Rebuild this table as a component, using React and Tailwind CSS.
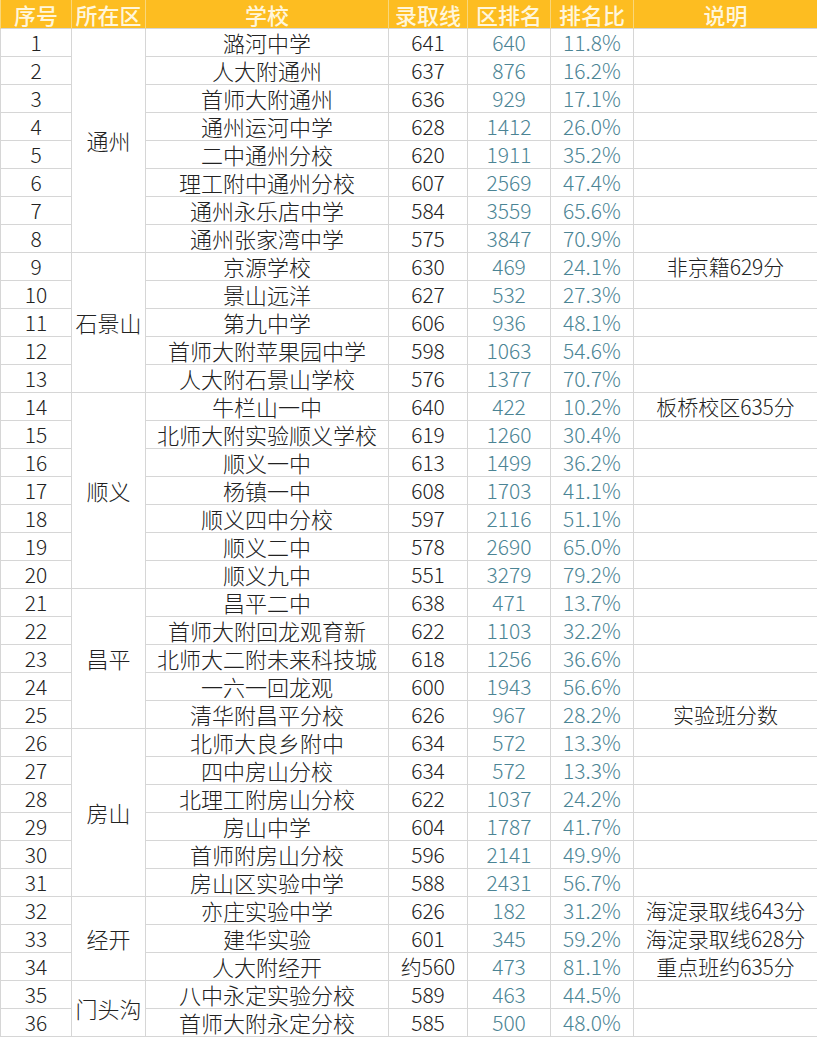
import React from "react";

const rows = [
  ["1", "潞河中学", "641", "640", "11.8%", ""],
  ["2", "人大附通州", "637", "876", "16.2%", ""],
  ["3", "首师大附通州", "636", "929", "17.1%", ""],
  ["4", "通州运河中学", "628", "1412", "26.0%", ""],
  ["5", "二中通州分校", "620", "1911", "35.2%", ""],
  ["6", "理工附中通州分校", "607", "2569", "47.4%", ""],
  ["7", "通州永乐店中学", "584", "3559", "65.6%", ""],
  ["8", "通州张家湾中学", "575", "3847", "70.9%", ""],
  ["9", "京源学校", "630", "469", "24.1%", "非京籍629分"],
  ["10", "景山远洋", "627", "532", "27.3%", ""],
  ["11", "第九中学", "606", "936", "48.1%", ""],
  ["12", "首师大附苹果园中学", "598", "1063", "54.6%", ""],
  ["13", "人大附石景山学校", "576", "1377", "70.7%", ""],
  ["14", "牛栏山一中", "640", "422", "10.2%", "板桥校区635分"],
  ["15", "北师大附实验顺义学校", "619", "1260", "30.4%", ""],
  ["16", "顺义一中", "613", "1499", "36.2%", ""],
  ["17", "杨镇一中", "608", "1703", "41.1%", ""],
  ["18", "顺义四中分校", "597", "2116", "51.1%", ""],
  ["19", "顺义二中", "578", "2690", "65.0%", ""],
  ["20", "顺义九中", "551", "3279", "79.2%", ""],
  ["21", "昌平二中", "638", "471", "13.7%", ""],
  ["22", "首师大附回龙观育新", "622", "1103", "32.2%", ""],
  ["23", "北师大二附未来科技城", "618", "1256", "36.6%", ""],
  ["24", "一六一回龙观", "600", "1943", "56.6%", ""],
  ["25", "清华附昌平分校", "626", "967", "28.2%", "实验班分数"],
  ["26", "北师大良乡附中", "634", "572", "13.3%", ""],
  ["27", "四中房山分校", "634", "572", "13.3%", ""],
  ["28", "北理工附房山分校", "622", "1037", "24.2%", ""],
  ["29", "房山中学", "604", "1787", "41.7%", ""],
  ["30", "首师附房山分校", "596", "2141", "49.9%", ""],
  ["31", "房山区实验中学", "588", "2431", "56.7%", ""],
  ["32", "亦庄实验中学", "626", "182", "31.2%", "海淀录取线643分"],
  ["33", "建华实验", "601", "345", "59.2%", "海淀录取线628分"],
  ["34", "人大附经开", "约560", "473", "81.1%", "重点班约635分"],
  ["35", "八中永定实验分校", "589", "463", "44.5%", ""],
  ["36", "首师大附永定分校", "585", "500", "48.0%", ""],
];

// district name keyed by the first row of its merged block
const districts = {
  0: ["通州", 8],
  8: ["石景山", 5],
  13: ["顺义", 7],
  20: ["昌平", 5],
  25: ["房山", 6],
  31: ["经开", 3],
  34: ["门头沟", 2],
};

const headers = ["序号", "所在区", "学校", "录取线", "区排名", "排名比", "说明"];
const cell = "border border-[#d6d6d6] p-0 text-center whitespace-nowrap leading-[26px]";

export default function App() {
  return (
    <div
      className="w-[817px] h-[1038px] bg-white overflow-hidden text-[#222222] font-light"
      style={{ fontFamily: '"Noto Sans CJK SC", "Liberation Sans", sans-serif' }}
    >
      <table className="table-fixed border-collapse w-[817px] text-[21px]">
        <colgroup>
          <col className="w-[71px]" />
          <col className="w-[74px]" />
          <col className="w-[243px]" />
          <col className="w-[79px]" />
          <col className="w-[83px]" />
          <col className="w-[83px]" />
          <col className="w-[184px]" />
        </colgroup>
        <thead>
          <tr className="h-[28px] bg-[#fdbd21]">
            {headers.map((h) => (
              <th
                key={h}
                className="border-x border-[#f9d77a] p-0 text-center text-[22px] font-medium text-[#fff6dc] leading-[26px]"
              >
                {h}
              </th>
            ))}
          </tr>
        </thead>
        <tbody>
          {rows.map((r, i) => (
            <tr key={r[0]} className="h-[28px]">
              <td className={cell}>{r[0]}</td>
              {districts[i] && (
                <td className={`${cell} text-[22px]`} rowSpan={districts[i][1]}>
                  {districts[i][0]}
                </td>
              )}
              <td className={`${cell} text-[22px]`}>{r[1]}</td>
              <td className={cell}>{r[2]}</td>
              <td className={`${cell} text-[#4b8494]`}>{r[3]}</td>
              <td className={`${cell} text-[#4b8494]`}>{r[4]}</td>
              <td className={cell}>{r[5]}</td>
            </tr>
          ))}
        </tbody>
      </table>
    </div>
  );
}
